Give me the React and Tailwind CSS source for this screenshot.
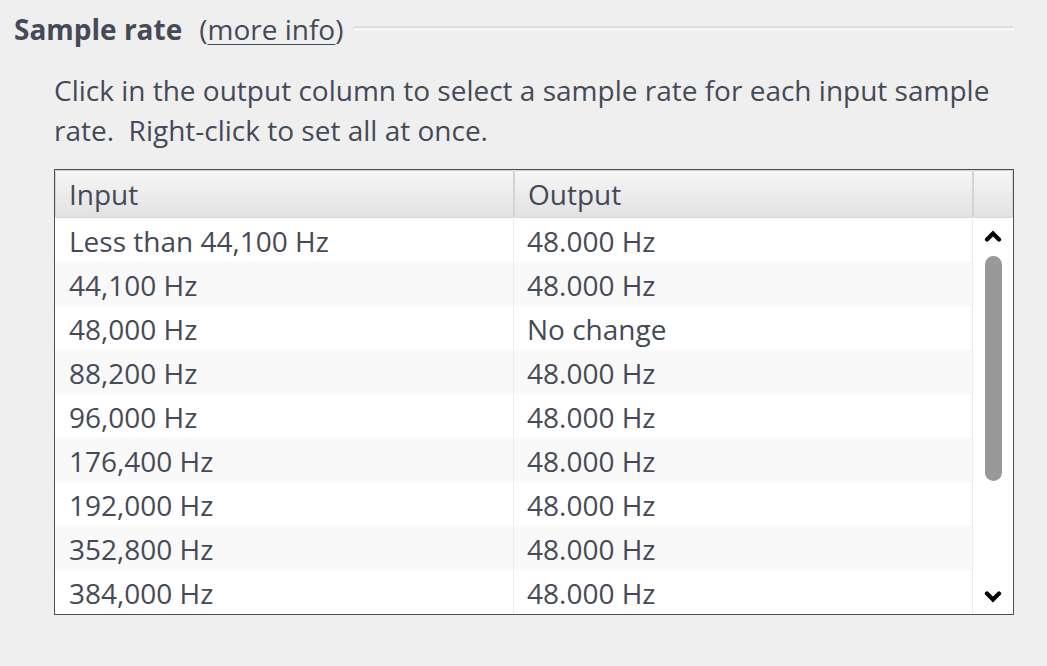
import React from 'react';

const rows = [
  ['Less than 44,100 Hz', '48.000 Hz'],
  ['44,100 Hz', '48.000 Hz'],
  ['48,000 Hz', 'No change'],
  ['88,200 Hz', '48.000 Hz'],
  ['96,000 Hz', '48.000 Hz'],
  ['176,400 Hz', '48.000 Hz'],
  ['192,000 Hz', '48.000 Hz'],
  ['352,800 Hz', '48.000 Hz'],
  ['384,000 Hz', '48.000 Hz'],
];

function Chevron({ up }) {
  return (
    <svg width="18" height="12" viewBox="0 0 18 12">
      <polyline
        points={up ? '3,9.5 9,3.5 15,9.5' : '3,2.5 9,8.5 15,2.5'}
        fill="none"
        stroke="#000"
        strokeWidth="4.2"
        strokeLinecap="round"
        strokeLinejoin="miter"
      />
    </svg>
  );
}

export default function App() {
  return (
    <div className="min-h-[666px] bg-[#efefef] font-['Open_Sans',sans-serif] text-[28px] text-[#454a57]">
      {/* section title with etched rule */}
      <div className="flex items-center pl-[14px] pr-[33px] pt-[12px] h-[46px]">
        <span className="font-bold">Sample rate</span>
        <span className="ml-[17px]">
          (<span className="underline underline-offset-[4px] decoration-1">more info</span>)
        </span>
        <div className="flex-1 ml-[10px] mt-[-3px] h-[4px] border-t-2 border-l border-r border-b border-t-[#dedede] border-l-[#dedede] border-r-white border-b-white" />
      </div>

      <div className="pl-[54px] pr-[33px]">
        <p className="mt-[24px] leading-[40px]">
          Click in the output column to select a sample rate for each input sample rate.&nbsp; Right-click to set all at once.
        </p>

        <div className="mt-[19px] border border-[#4b4f58] bg-white">
          {/* header */}
          <div className="grid grid-cols-[459px_459px_1fr] h-[48px] bg-[#efefef]">
            {['Input', 'Output', ''].map((h, i) => (
              <div
                key={i}
                className="flex items-center pl-[13px] border border-[#d4d4d4] rounded-[2px] bg-gradient-to-b from-[#f6f6f6] to-[#e2e2e2]"
              >
                {h}
              </div>
            ))}
          </div>

          {/* body */}
          <div className="flex">
            <div className="w-[918px]">
              {rows.map(([a, b], i) => (
                <div
                  key={i}
                  className={`grid grid-cols-[459px_459px] h-[44px] ${i % 2 === 1 ? 'bg-[#f9f9f9]' : 'bg-white'}`}
                >
                  <div className="flex items-center pl-[14px] pt-[2px] border-r border-[#ececec]">{a}</div>
                  <div className="flex items-center pl-[13px] pt-[2px] border-r border-[#ececec]">{b}</div>
                </div>
              ))}
            </div>
            <div className="flex-1 flex flex-col items-center pt-[12px] pb-[11px]">
              <Chevron up />
              <div className="mt-[14px] w-[17px] h-[225px] rounded-full bg-[#999999]" />
              <div className="flex-1" />
              <Chevron />
            </div>
          </div>
        </div>
      </div>
    </div>
  );
}
